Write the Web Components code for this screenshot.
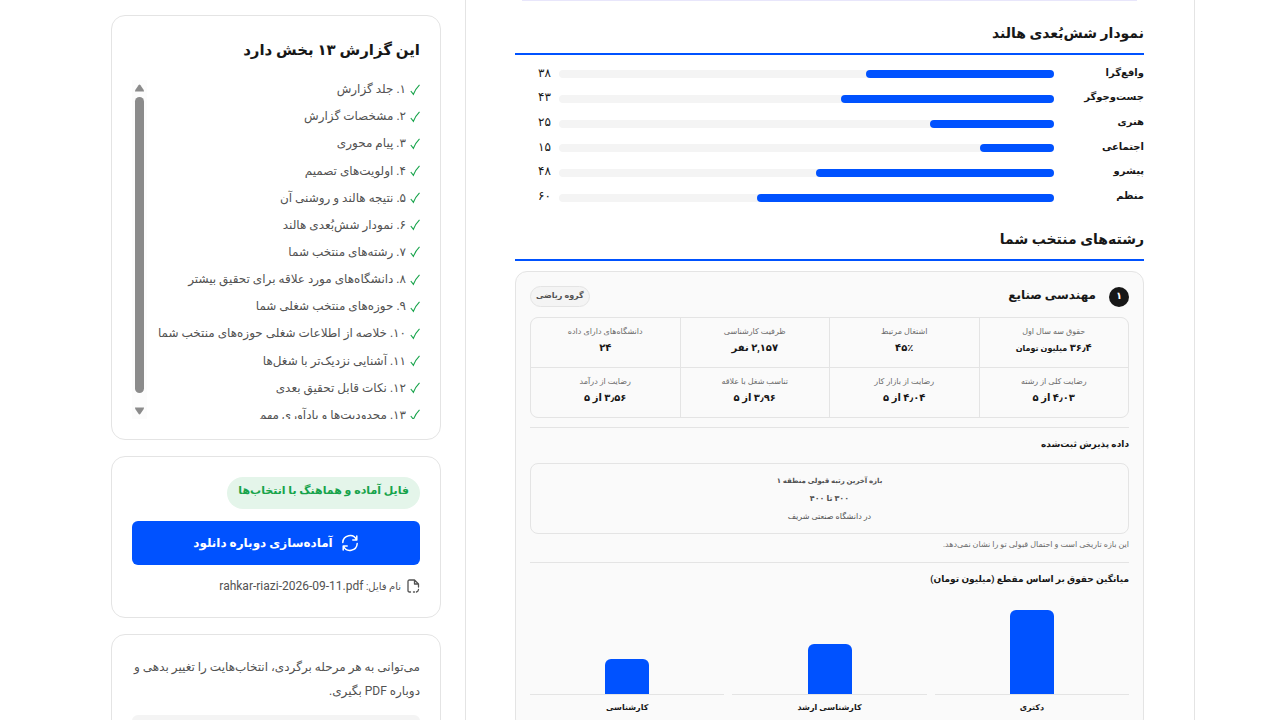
<!DOCTYPE html>
<html lang="fa" dir="rtl">
<head>
<meta charset="utf-8">
<title>گزارش انتخاب رشته</title>
<style>
body { margin: 0; background: #fff; color: #171717; font-family: Roboto, "DejaVu Sans", sans-serif; }
</style>
</head>
<body>
<report-page>
  <report-sheet>
    <report-section heading="نمودار شش‌بُعدی هالند">
      <holland-chart>
        <holland-bar label="واقع‌گرا" value="38"></holland-bar>
        <holland-bar label="جست‌وجوگر" value="43"></holland-bar>
        <holland-bar label="هنری" value="25"></holland-bar>
        <holland-bar label="اجتماعی" value="15"></holland-bar>
        <holland-bar label="پیشرو" value="48"></holland-bar>
        <holland-bar label="منظم" value="60"></holland-bar>
      </holland-chart>
    </report-section>
    <report-section heading="رشته‌های منتخب شما">
      <major-card rank="۱" name="مهندسی صنایع" group="گروه ریاضی"></major-card>
    </report-section>
  </report-sheet>
  <side-panel slot="side">
    <panel-card><section-list></section-list></panel-card>
    <panel-card><download-box filename="rahkar-riazi-2026-09-11.pdf"></download-box></panel-card>
    <panel-card><edit-note></edit-note></panel-card>
  </side-panel>
</report-page>
<script>
const fa = n => String(n).replace(/\d/g, d => '۰۱۲۳۴۵۶۷۸۹'[d]);

function define(name, render) {
  customElements.define(name, class extends HTMLElement {
    connectedCallback() {
      if (this.shadowRoot) return;
      this.attachShadow({ mode: 'open' }).innerHTML =
        '<style>*{box-sizing:border-box}h2,h3,h4,p,ul,dl,dd,dt,figure{margin:0;padding:0}</style>' + render(this);
    }
  });
}

define('report-page', () => `
<style>
:host { display: grid; grid-template-columns: minmax(0, 1fr) 330px; gap: 24px; height: 100vh; overflow: hidden; padding-inline: 85px 111px; box-sizing: border-box; }
</style>
<slot></slot><slot name="side"></slot>`);

define('report-sheet', () => `
<style>
:host { display: block; border-inline: 1px solid #e4e4e4; padding-inline: 50px 49px; }
.prev { height: 1px; margin-inline: 7px; background: #e8e6fb; }
.body { padding-top: 20px; display: grid; gap: 17px; }
</style>
<div class="prev"></div><div class="body"><slot></slot></div>`);

define('report-section', el => `
<style>
:host { display: block; }
h2 { font-size: 14px; line-height: 24px; font-weight: 700; padding-bottom: 8px; border-bottom: 2px solid #0052ff; }
.content { padding-top: 7px; }
:host(:last-of-type) .content { padding-top: 10px; }
</style>
<h2>${el.getAttribute('heading')}</h2><div class="content"><slot></slot></div>`);

define('holland-chart', () => `
<style>
:host { display: grid; grid-template-rows: repeat(6, 1fr); height: 148px; }
</style><slot></slot>`);

define('holland-bar', el => `
<style>
:host { display: grid; grid-template-columns: 82px minmax(0, 1fr) 36px; gap: 8px; align-items: center; line-height: 20px; }
.label { font-size: 10px; font-weight: 700; }
.value { font-size: 12px; }
.track { height: 8px; border-radius: 4px; background: #f4f4f4; }
.fill { height: 8px; border-radius: 4px; background: #0052ff; width: ${el.getAttribute('value')}%; }
span { padding-bottom: 3px; }
</style>
<span class="label">${el.getAttribute('label')}</span>
<div class="track"><div class="fill"></div></div>
<span class="value">${fa(el.getAttribute('value'))}</span>`);

const stats = [
  ['حقوق سه سال اول', '۳۶٫۴ <small>میلیون تومان</small>'],
  ['اشتغال مرتبط', '۴۵٪'],
  ['ظرفیت کارشناسی', '۲,۱۵۷ نفر'],
  ['دانشگاه‌های دارای داده', '۲۴'],
  ['رضایت کلی از رشته', '۴٫۰۳ از ۵'],
  ['رضایت از بازار کار', '۴٫۰۴ از ۵'],
  ['تناسب شغل با علاقه', '۳٫۹۶ از ۵'],
  ['رضایت از درآمد', '۳٫۵۶ از ۵']
];

define('major-card', el => `
<style>
:host { display: block; background: #fafafa; border: 1px solid #e4e4e4; border-radius: 12px; padding: 14px; }
header { display: flex; align-items: center; gap: 13px; height: 21px; margin-bottom: 10px; }
.rank { width: 20px; height: 20px; border-radius: 50%; background: #171717; color: #fff; font-size: 10px; line-height: 18px; font-weight: 700; text-align: center; }
h3 { font-size: 12px; line-height: 21px; padding-bottom: 2px; flex: 1; }
.group { border: 1px solid #e4e4e4; border-radius: 11px; background: #f4f4f4; color: #525252; font-size: 8px; line-height: 17px; height: 21px; padding-inline: 5px; font-weight: 700; }
hr { border: 0; border-top: 1px solid #e4e4e4; margin: 9px 0 8px; }
h4 { font-size: 9px; line-height: 16px; }
</style>
<header><span class="rank">${el.getAttribute('rank')}</span><h3>${el.getAttribute('name')}</h3><span class="group">${el.getAttribute('group')}</span></header>
<stat-grid></stat-grid>
<hr>
<h4>داده پذیرش ثبت‌شده</h4>
<admission-range></admission-range>
<hr>
<h4>میانگین حقوق بر اساس مقطع (میلیون تومان)</h4>
<salary-chart></salary-chart>`);

define('stat-grid', () => `
<style>
:host { display: block; border: 1px solid #e4e4e4; border-radius: 8px; overflow: hidden; background: #e4e4e4; }
dl { display: grid; grid-template-columns: repeat(4, minmax(0, 1fr)); gap: 1px; }
div { background: #fafafa; height: 49px; padding-top: 6px; text-align: center; }
dt { font-size: 8px; line-height: 15px; color: #6b6b6b; }
dd { font-size: 10px; line-height: 18px; font-weight: 700; }
small { font-size: 8px; }
</style>
<dl>${stats.map(([t, d]) => `<div><dt>${t}</dt><dd>${d}</dd></div>`).join('')}</dl>`);

define('admission-range', () => `
<style>
:host { display: block; color: #525252; font-size: 8px; }
.box { border: 1px solid #e4e4e4; border-radius: 8px; margin-top: 11px; height: 71px; padding-top: 8px; text-align: center; line-height: 18px; }
b { font-size: 7px; }
.wide { font-size: 8px; }
.note { line-height: 16px; margin-top: 3px; color: #6b6b6b; }
</style>
<div class="box"><p><b>بازه آخرین رتبه قبولی منطقه ۱</b></p><p><b class="wide">۳۰۰ تا ۴۰۰</b></p><p>در دانشگاه صنعتی شریف</p></div>
<p class="note">این بازه تاریخی است و احتمال قبولی تو را نشان نمی‌دهد.</p>`);

define('salary-chart', () => `
<style>
:host { display: grid; grid-template-columns: repeat(3, minmax(0, 1fr)); gap: 8px; margin-top: 8px; text-align: center; font-size: 8px; line-height: 16px; font-weight: 700; }
.plot { height: 100px; border-bottom: 1px solid #e4e4e4; display: flex; align-items: flex-end; justify-content: center; }
.bar { width: 44px; background: #0052ff; border-radius: 6px 6px 0 0; }
figcaption { padding-top: 5px; }
</style>
${[['دکتری', 84], ['کارشناسی ارشد', 50], ['کارشناسی', 35]].map(([t, h]) =>
  `<figure><div class="plot"><div class="bar" style="height:${h}px"></div></div><figcaption>${t}</figcaption></figure>`).join('')}`);

define('side-panel', () => `
<style>
:host { display: flex; flex-direction: column; gap: 16px; padding-top: 15px; }
</style><slot></slot>`);

define('panel-card', () => `
<style>
:host { display: block; flex: none; border: 1px solid #e4e4e4; border-radius: 14px; padding: 20px; }
</style><slot></slot>`);

const sections = ['جلد گزارش', 'مشخصات گزارش', 'پیام محوری', 'اولویت‌های تصمیم', 'نتیجه هالند و روشنی آن', 'نمودار شش‌بُعدی هالند', 'رشته‌های منتخب شما', 'دانشگاه‌های مورد علاقه برای تحقیق بیشتر', 'حوزه‌های منتخب شغلی شما', 'خلاصه از اطلاعات شغلی حوزه‌های منتخب شما', 'آشنایی نزدیک‌تر با شغل‌ها', 'نکات قابل تحقیق بعدی', 'محدودیت‌ها و یادآوری مهم'];

define('section-list', () => `
<style>
:host { display: block; }
h2 { font-size: 15px; line-height: 28px; margin-bottom: 16px; }
.view { display: flex; justify-content: space-between; height: 339px; overflow: hidden; }
ul { list-style: none; display: grid; grid-template-rows: repeat(13, 1fr); gap: 8px; height: 345px; flex: 1; }
li { display: flex; align-items: center; gap: 4px; color: #525252; font-size: 12px; line-height: 19px; white-space: nowrap; }
li svg { width: 10px; height: 12px; flex: none; }
.scroll { width: 15px; background: #fcfcfc; display: flex; flex-direction: column; align-items: center; padding: 4px 0; gap: 5px; }
.scroll svg { width: 9px; height: 8px; flex: none; }
.thumb { width: 9px; flex: 1; border-radius: 5px; background: #8b8b8b; margin-bottom: 9px; }
</style>
<h2>این گزارش ۱۳ بخش دارد</h2>
<div class="view">
<ul>${sections.map((s, i) => `<li><svg viewBox="0 0 10 12" fill="none" stroke="#16a34a" stroke-width="1.1"><path d="M.8 7 3.4 10.300Q5.500 4.800 9.500.8"/></svg><span>${fa(i + 1)}. ${s}</span></li>`).join('')}</ul>
<div class="scroll"><svg viewBox="0 0 9 8" fill="#8b8b8b"><path d="M0 7.500Q0 6.500.6 5.500L3.500 1.200Q4.500 0 5.500 1.200L8.400 5.500Q9 6.500 9 7.500Z"/></svg><div class="thumb"></div><svg viewBox="0 0 9 8" fill="#8b8b8b"><path d="M0 .5Q0 1.500.6 2.500L3.500 6.800Q4.500 8 5.500 6.800L8.400 2.500Q9 1.500 9 .5Z"/></svg></div>
</div>`);

define('download-box', el => `
<style>
:host { display: flex; flex-direction: column; align-items: flex-start; gap: 12px; }
.ready { background: #e4f5ea; color: #16a34a; font-size: 11px; line-height: 28px; height: 32px; border-radius: 16px; padding-inline: 11px; font-weight: 700; white-space: nowrap; }
button { width: 100%; height: 44px; border: 0; border-radius: 6px; background: #0052ff; color: #fff; font: 700 12px/20px Roboto, "DejaVu Sans", sans-serif; display: flex; align-items: center; justify-content: center; gap: 8px; padding: 0; }
.file { display: flex; align-items: center; gap: 5px; line-height: 18px; color: #525252; height: 20px; padding-bottom: 2px; white-space: nowrap; }
.file span { font-size: 10px; }
.file bdi { font-size: 12px; }
</style>
<span class="ready">فایل آماده و هماهنگ با انتخاب‌ها</span>
<button type="button"><svg width="18" height="18" viewBox="0 0 18 18" fill="none" stroke="#fff" stroke-width="1.500" stroke-linecap="round" stroke-linejoin="round"><path d="M1.800 8.500A7.200 7.200 0 0 1 15.600 6M15.800 2v4h-4M16.200 9.500A7.200 7.200 0 0 1 2.400 12M2.200 16v-4h4"/></svg>آماده‌سازی دوباره دانلود</button>
<div class="file"><svg width="14" height="14" viewBox="0 0 14 14" fill="none" stroke="#525252" stroke-width="1.300" stroke-linecap="round" stroke-linejoin="round"><path d="M4.500 13H3.500Q2 13 2 11.500V2.500Q2 1 3.500 1H8.500L12.500 5V8M8.500 1v4h4M12.500 10.500Q12.300 12.500 10.500 13M8.500 13H7.500"/></svg><span>نام فایل: <bdi>${el.getAttribute('filename')}</bdi></span></div>`);

define('edit-note', () => `
<style>
:host { display: block; }
p { font-size: 12px; line-height: 24px; color: #525252; }
.next { height: 44px; margin-top: 12px; border-radius: 6px; background: #f4f4f4; }
</style>
<p>می‌توانی به هر مرحله برگردی، انتخاب‌هایت را تغییر بدهی و دوباره PDF بگیری.</p><div class="next"></div>`);
</script>
</body>
</html>
